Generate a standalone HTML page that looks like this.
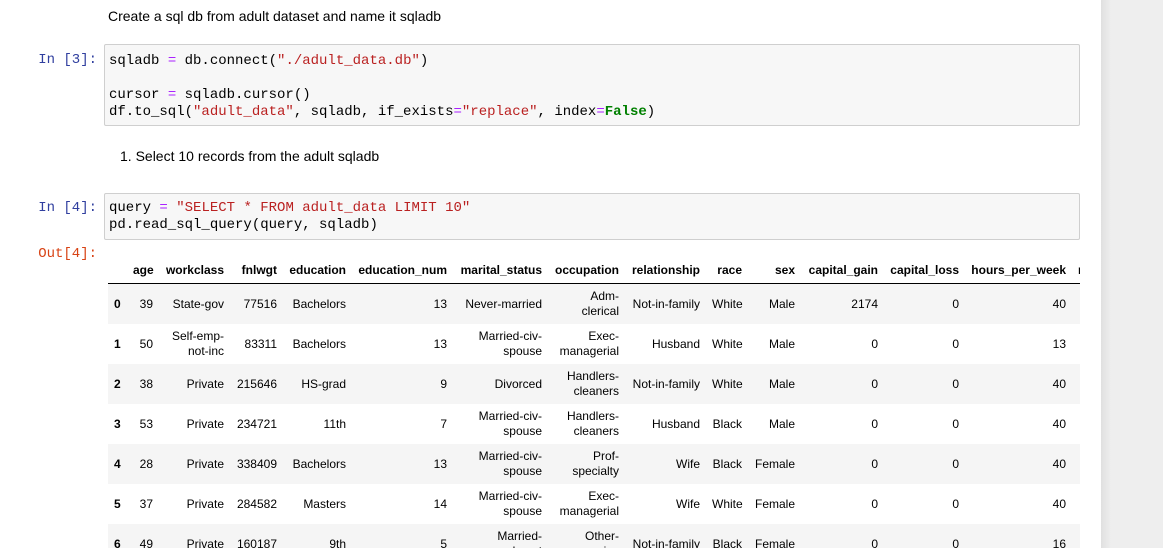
<!DOCTYPE html>
<html><head><meta charset="utf-8"><style>
html,body{margin:0;padding:0;width:1163px;height:548px;overflow:hidden;background:#eeeeee;}
.page{position:absolute;left:0;top:0;width:1101px;height:548px;background:#fff;}
.shadow{position:absolute;left:1101px;top:0;width:10px;height:548px;background:linear-gradient(to right,#e0e0e0,#eeeeee);}
.md{position:absolute;font:14px "Liberation Sans",sans-serif;color:#000;}
.prompt{position:absolute;font:14px "Liberation Mono",monospace;text-align:right;width:97px;left:0;}
.in{color:#303F9F}.out{color:#D84315}
.code{position:absolute;left:104px;width:974px;background:#f7f7f7;border:1px solid #cfcfcf;border-radius:2px;}
.code pre{margin:0;position:absolute;left:4px;font:14px "Liberation Mono",monospace;line-height:17px;color:#000;}
.s{color:#BA2121}.o{color:#AA22FF}.k{color:#008000;font-weight:bold}
.wrap{position:absolute;left:108px;top:256px;width:972px;height:292px;overflow:hidden;}
table{border-collapse:collapse;table-layout:fixed;font:12px "Liberation Sans",sans-serif;color:#000;width:1072px;}
th,td{text-align:right;padding:0 6px;overflow:hidden;white-space:normal;}
thead th{height:27px;border-bottom:1px solid #000;vertical-align:middle;font-weight:bold;white-space:nowrap;}
tbody td,tbody th{height:40px;line-height:15px;vertical-align:middle;}
tbody th{text-align:left;font-weight:bold;}
tbody tr:nth-child(odd){background:#f5f5f5;}
</style></head><body>
<div class="page">
<div class="md" style="left:108px;top:8px;">Create a sql db from adult dataset and name it sqladb</div>
<div class="prompt in" style="top:52px;">In [3]:</div>
<div class="code" style="top:44px;height:80px;"><pre style="top:8px;">sqladb <span class="o">=</span> db.connect(<span class="s">"./adult_data.db"</span>)

cursor <span class="o">=</span> sqladb.cursor()
df.to_sql(<span class="s">"adult_data"</span>, sqladb, if_exists<span class="o">=</span><span class="s">"replace"</span>, index<span class="o">=</span><span class="k">False</span>)</pre></div>
<div class="md" style="left:120px;top:148px;">1. Select 10 records from the adult sqladb</div>
<div class="prompt in" style="top:200px;">In [4]:</div>
<div class="code" style="top:193px;height:45px;"><pre style="top:6px;">query <span class="o">=</span> <span class="s">"SELECT * FROM adult_data LIMIT 10"</span>
pd.read_sql_query(query, sqladb)</pre></div>
<div class="prompt out" style="top:246px;">Out[4]:</div>
<div class="wrap"><table>
<colgroup><col style="width:19px"><col style="width:32px"><col style="width:71px"><col style="width:53px"><col style="width:69px"><col style="width:101px"><col style="width:95px"><col style="width:77px"><col style="width:81px"><col style="width:42px"><col style="width:53px"><col style="width:83px"><col style="width:81px"><col style="width:107px"><col style="width:108px"></colgroup>
<thead><tr><th></th><th>age</th><th>workclass</th><th>fnlwgt</th><th>education</th><th>education_num</th><th>marital_status</th><th>occupation</th><th>relationship</th><th>race</th><th>sex</th><th>capital_gain</th><th>capital_loss</th><th>hours_per_week</th><th style="text-align:left">native_country</th></tr></thead>
<tbody>
<tr><th>0</th><td>39</td><td>State-gov</td><td>77516</td><td>Bachelors</td><td>13</td><td>Never-married</td><td>Adm-clerical</td><td>Not-in-family</td><td>White</td><td>Male</td><td>2174</td><td>0</td><td>40</td><td>United-States</td></tr>
<tr><th>1</th><td>50</td><td>Self-emp-not-inc</td><td>83311</td><td>Bachelors</td><td>13</td><td>Married-civ-spouse</td><td>Exec-managerial</td><td>Husband</td><td>White</td><td>Male</td><td>0</td><td>0</td><td>13</td><td>United-States</td></tr>
<tr><th>2</th><td>38</td><td>Private</td><td>215646</td><td>HS-grad</td><td>9</td><td>Divorced</td><td>Handlers-cleaners</td><td>Not-in-family</td><td>White</td><td>Male</td><td>0</td><td>0</td><td>40</td><td>United-States</td></tr>
<tr><th>3</th><td>53</td><td>Private</td><td>234721</td><td>11th</td><td>7</td><td>Married-civ-spouse</td><td>Handlers-cleaners</td><td>Husband</td><td>Black</td><td>Male</td><td>0</td><td>0</td><td>40</td><td>United-States</td></tr>
<tr><th>4</th><td>28</td><td>Private</td><td>338409</td><td>Bachelors</td><td>13</td><td>Married-civ-spouse</td><td>Prof-specialty</td><td>Wife</td><td>Black</td><td>Female</td><td>0</td><td>0</td><td>40</td><td>Cuba</td></tr>
<tr><th>5</th><td>37</td><td>Private</td><td>284582</td><td>Masters</td><td>14</td><td>Married-civ-spouse</td><td>Exec-managerial</td><td>Wife</td><td>White</td><td>Female</td><td>0</td><td>0</td><td>40</td><td>United-States</td></tr>
<tr><th>6</th><td>49</td><td>Private</td><td>160187</td><td>9th</td><td>5</td><td>Married-spouse-absent</td><td>Other-service</td><td>Not-in-family</td><td>Black</td><td>Female</td><td>0</td><td>0</td><td>16</td><td>Jamaica</td></tr>
</tbody></table></div>
</div>
<div class="shadow"></div>
</body></html>
